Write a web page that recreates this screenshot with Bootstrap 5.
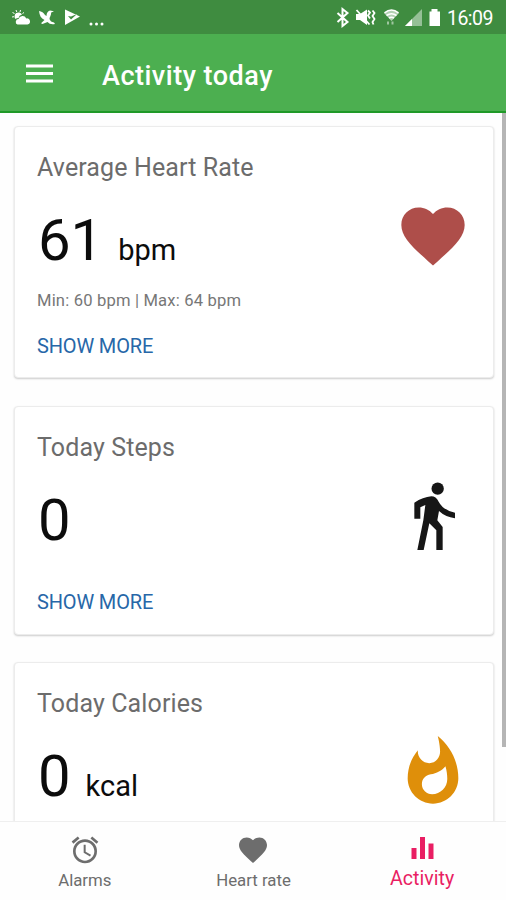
<!DOCTYPE html>
<html lang="en">
<head>
<meta charset="utf-8">
<meta name="viewport" content="width=device-width, initial-scale=1">
<title>Activity today</title>
<link href="https://cdn.jsdelivr.net/npm/bootstrap@5.3.0/dist/css/bootstrap.min.css" rel="stylesheet">
<style>
body{font-family:Roboto,"Liberation Sans",sans-serif;background:#fefefe;color:#0c0c0c}
.app{height:900px}
.status{height:34px;background:#3f8c40;padding:0 13px 0 11px}
.clock{font-size:19.5px;line-height:34px;letter-spacing:-.5px;padding-top:3px}
.topbar{height:79px;background:#4caf50;border-bottom:2px solid #1f9a27;padding:3px 27px 0 26px}
.topbar h1{font-size:27px;line-height:34px;margin-left:49px;font-weight:500;letter-spacing:.5px;padding-top:3px}
.feed{padding:13px 8px 0 14px}
.metric{border:1px solid #ececec;border-radius:4px;box-shadow:0 1px 2px rgba(0,0,0,.2);padding:26px 27px 0 22px;margin-bottom:28px;width:480px}
.metric-rate{height:252px}
.metric-steps{height:229px;margin-bottom:27px}
.metric-cal{height:253px}
.metric h2{font-size:25px;line-height:30px;color:#6c6c6c;margin-bottom:27px;letter-spacing:.12px}
.reading{height:59px}
.value{font-size:58px;line-height:59px;margin-left:1px;padding-top:1px}
.unit{font-size:29px;line-height:59px;padding-top:11px;margin-left:15px}
.range{font-size:16.6px;line-height:20px;color:#777;margin-top:22px;letter-spacing:.17px}
.more{font-size:20px;line-height:24px;color:#2767a8;letter-spacing:-.15px}
.metric-rate .more{margin-top:23px}
.metric-steps .more{margin-top:41px}
.picto{width:76px;height:76px;margin:-12px -5px 0 0}
.thumb{width:5px;height:634px;background:#b5b5b5}
.tabs{height:79px;border-top:1px solid #efefef;background:#fefefe;color:#6d6d6d}
.tabs a{font-size:16.8px;line-height:20px;padding:12px 0 0 1px}
.tabs svg{width:32px;height:32px;margin-bottom:4px}
.tabs .current{color:#e91e63;font-size:19.6px;padding-top:9px}
.tabs .current svg{margin-bottom:6px}
</style>
</head>
<body>
<div class="app d-flex flex-column overflow-hidden">
  <div class="status d-flex align-items-center justify-content-between text-white flex-shrink-0">
    <svg width="96" height="22" viewBox="11 6 96 22" fill="#fff">
      <path d="M15.500 19a4 4 0 1 1 6.500-4.600q-3 .6-3.500 3.600-2 0-3 1z"/>
      <path d="M12 17l2-.3M12.500 12.500l2 1M16 10l.8 2M20.500 10l-.5 2M24 12.500l-1.500 1" stroke="#fff" stroke-width="1"/>
      <path d="M17.500 24.500a2.800 2.800 0 0 1 1-5.400 4.200 4.200 0 0 1 7.800-.7 3 3 0 0 1 1.200 6.100z"/>
      <path d="M39 11q4 .5 6 4l1.500 1q0-4.500 3.500-5.500l4 .7-2.800 1.300c0 3-1.700 4.500-1.700 6.500q1 3 4.500 3.500l1 1.500q-5 1-7.500-2l-5 2-1.500-.8 3.500-3.200c-3.500-1.500-5-4.500-5.500-9z"/>
      <path fill-rule="evenodd" d="M65 9.500L80 16.500 65 25zM68 16l3 3.500 6-5.500-6 2.500z"/>
      <circle cx="91" cy="24" r="1.500"/><circle cx="96.500" cy="24" r="1.500"/><circle cx="102" cy="24" r="1.500"/>
    </svg>
    <div class="d-flex align-items-center">
      <svg width="108" height="22" viewBox="335 6 108 22" fill="#fff">
        <path d="M337.500 13l10 9-5 4V9l5 4-10 9" fill="none" stroke="#fff" stroke-width="2"/>
        <path d="M356 14h4l7-4.500v15.500l-7-5h-4z"/>
        <path d="M356.500 10l13 14.500" stroke="#fff" stroke-width="1.800"/>
        <path d="M368 10.500l2 2-2 3 2 3M372.500 10.500l2 2.500-2 3 2 3-2 3 1 2.500" fill="none" stroke="#fff" stroke-width="1.800"/>
        <path d="M384 13q7.500-6 15 0l-7.500 8z" opacity=".6"/>
        <path d="M384.500 12.800q7-5.500 14 0M386.500 15.500q5-3.500 10 0M389 18q2.500-1.500 5 0" fill="none" stroke="#fff" stroke-width="1.600"/>
        <path d="M387 21.500h2v3h-2zM391.500 21.500h2v3h-2z" opacity=".5"/>
        <path d="M405 26l17-17v17z" opacity=".45"/><path d="M405 26l7-7v7z"/>
        <path d="M429.500 11.500h2V9h6v2.500h2.500V26h-10.500z"/>
      </svg>
      <span class="clock ms-1">16:09</span>
    </div>
  </div>

  <header class="topbar d-flex align-items-center text-white flex-shrink-0">
    <svg width="27" height="20" viewBox="0 0 27 20" fill="#fff"><path d="M0 .5h27v3H0zM0 8h27v3H0zM0 15.500h27v3H0z"/></svg>
    <h1 class="mb-0">Activity today</h1>
  </header>

  <main class="d-flex flex-grow-1 overflow-hidden">
    <div class="feed flex-grow-1">
      <section class="card metric metric-rate">
        <h2 class="fw-normal">Average Heart Rate</h2>
        <div class="reading d-flex">
          <span class="value">61</span><span class="unit">bpm</span>
          <svg class="picto ms-auto" viewBox="0 0 24 24" fill="#ae4e4a"><path d="M12 21.350l-1.450-1.320C5.400 15.360 2 12.280 2 8.500 2 5.420 4.420 3 7.500 3c1.740 0 3.410.81 4.500 2.090C13.090 3.810 14.760 3 16.500 3 19.580 3 22 5.420 22 8.500c0 3.780-3.400 6.860-8.550 11.540z"/></svg>
        </div>
        <div class="range">Min: 60 bpm | Max: 64 bpm</div>
        <a class="more text-decoration-none" href="#">SHOW MORE</a>
      </section>
      <section class="card metric metric-steps">
        <h2 class="fw-normal">Today Steps</h2>
        <div class="reading d-flex">
          <span class="value">0</span>
          <svg class="picto ms-auto" viewBox="-39 3 228 228" fill="#161616"><circle cx="89" cy="35" r="18.500"/><path d="M19 77Q45 60 70 58 84 58 92 74 106 100 141 107V124Q112 120 93 102L88 130 104 150V219H85V160L64 139 47 219H28L46 130 52 84 37 91V125H19z"/></svg>
        </div>
        <a class="more text-decoration-none" href="#">SHOW MORE</a>
      </section>
      <section class="card metric metric-cal">
        <h2 class="fw-normal">Today Calories</h2>
        <div class="reading d-flex">
          <span class="value">0</span><span class="unit">kcal</span>
          <svg class="picto ms-auto" viewBox="0 0 24 24" fill="#df8f0a"><path d="M13.500.67s.74 2.650.74 4.800c0 2.060-1.350 3.730-3.410 3.730-2.070 0-3.630-1.670-3.630-3.730l.03-.36C5.210 7.510 4 10.620 4 14c0 4.420 3.580 8 8 8s8-3.580 8-8C20 8.610 17.410 3.800 13.500.67zM11.710 19c-1.780 0-3.220-1.400-3.220-3.140 0-1.620 1.050-2.760 2.810-3.120 1.770-.36 3.600-1.210 4.620-2.580.39 1.290.59 2.650.59 4.040 0 2.650-2.150 4.800-4.800 4.800z"/></svg>
        </div>
      </section>
    </div>
    <div class="thumb flex-shrink-0"></div>
  </main>

  <nav class="tabs d-flex flex-shrink-0">
    <a class="col-4 d-flex flex-column align-items-center text-reset text-decoration-none" href="#">
      <svg viewBox="0 0 24 24" fill="currentColor"><path d="M22 5.720l-4.600-3.860-1.290 1.530 4.600 3.860L22 5.720zM7.880 3.390L6.600 1.860 2 5.710l1.290 1.530 4.590-3.850zM12.500 8H11v6l4.750 2.850.75-1.230-4-2.370V8zM12 4c-4.970 0-9 4.030-9 9s4.020 9 9 9a9 9 0 0 0 0-18zm0 16c-3.870 0-7-3.130-7-7s3.130-7 7-7 7 3.130 7 7-3.130 7-7 7z"/></svg>
      <span>Alarms</span>
    </a>
    <a class="col-4 d-flex flex-column align-items-center text-reset text-decoration-none" href="#">
      <svg viewBox="0 0 24 24" fill="currentColor"><path d="M12 21.350l-1.450-1.320C5.400 15.360 2 12.280 2 8.500 2 5.420 4.420 3 7.500 3c1.740 0 3.410.81 4.500 2.090C13.090 3.810 14.760 3 16.500 3 19.580 3 22 5.420 22 8.500c0 3.780-3.400 6.860-8.550 11.540z" transform="translate(-.6 -.6) scale(1.050)"/></svg>
      <span>Heart rate</span>
    </a>
    <a class="col-4 d-flex flex-column align-items-center current text-decoration-none" href="#">
      <svg viewBox="0 0 32 32" fill="currentColor"><path d="M5.500 17h5v11h-5zM14 6h5v22h-5zM22.500 12.500h5V28h-5z"/></svg>
      <span>Activity</span>
    </a>
  </nav>
</div>
<script src="https://cdn.jsdelivr.net/npm/bootstrap@5.3.0/dist/js/bootstrap.bundle.min.js"></script>
</body>
</html>
